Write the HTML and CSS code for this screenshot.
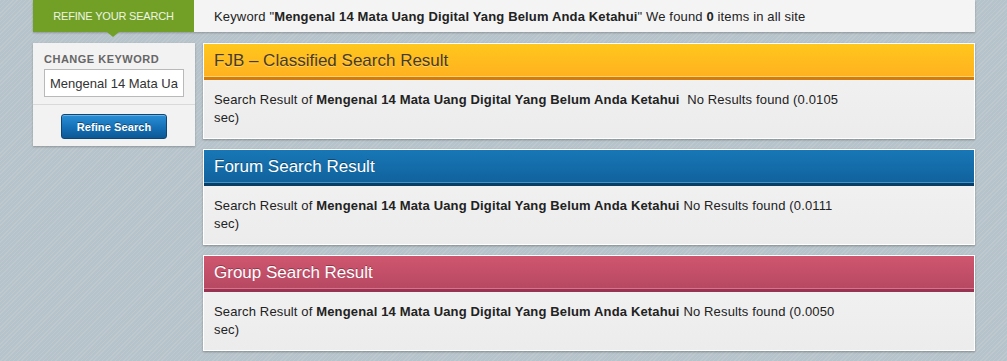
FILE: index.html
```html
<!DOCTYPE html>
<html>
<head>
<meta charset="utf-8">
<link rel="stylesheet" href="styles.css">
</head>
<body>
<div class="page">
  <div class="topbar">
    <div class="tab">REFINE YOUR SEARCH</div>
    <div class="summary">Keyword "<b>Mengenal 14 Mata Uang Digital Yang Belum Anda Ketahui</b>" We found <b>0</b> items in all site</div>
  </div>
  <div class="main">
    <div class="sidebar">
      <div class="side-top">
        <div class="label">CHANGE KEYWORD</div>
        <input class="kw" type="text" value="Mengenal 14 Mata Uang Digital Yang Belum Anda Ketahui">
      </div>
      <div class="side-bottom">
        <button class="btn">Refine Search</button>
      </div>
    </div>
    <div class="results">
      <div class="panel fjb">
        <div class="head">FJB – Classified Search Result</div>
        <div class="body"><p><span>Search Result of <b>Mengenal 14 Mata Uang Digital Yang Belum Anda Ketahui</b>&nbsp; No Results found (0.0105</span><br><span>sec)</span></p></div>
      </div>
      <div class="panel forum">
        <div class="head">Forum Search Result</div>
        <div class="body"><p><span>Search Result of <b>Mengenal 14 Mata Uang Digital Yang Belum Anda Ketahui</b> No Results found (0.0111</span><br><span>sec)</span></p></div>
      </div>
      <div class="panel group">
        <div class="head">Group Search Result</div>
        <div class="body"><p><span>Search Result of <b>Mengenal 14 Mata Uang Digital Yang Belum Anda Ketahui</b> No Results found (0.0050</span><br><span>sec)</span></p></div>
      </div>
    </div>
  </div>
</div>
</body>
</html>
```

FILE: styles.css
```css
html, body {
  margin: 0;
  padding: 0;
}
body {
  width: 1007px;
  height: 361px;
  overflow: hidden;
  font-family: "Liberation Sans", Arial, sans-serif;
  font-size: 13px;
  letter-spacing: 0.15px;
  color: #222;
  background-color: #b7c3ca;
  background-image: repeating-linear-gradient(135deg, rgba(255,255,255,0.10) 0 1px, rgba(0,0,0,0) 1px 3px);
}
.page {
  padding-left: 33px;
  width: 942px;
}
.topbar {
  display: flex;
  height: 32px;
  background: #f4f4f4;
  box-shadow: 0 1px 2px rgba(0,0,0,0.25);
  position: relative;
}
.tab {
  position: relative;
  width: 161px;
  background: #72a026;
  color: #eef5e2;
  font-size: 11px;
  letter-spacing: -0.2px;
  display: flex;
  align-items: center;
  justify-content: center;
}
.tab::after {
  content: "";
  position: absolute;
  left: 74px;
  top: 32px;
  border-left: 6px solid transparent;
  border-right: 6px solid transparent;
  border-top: 5px solid #72a026;
}
.summary {
  padding-left: 20px;
  display: flex;
  align-items: center;
  white-space: pre;
  color: #222;
}
.main {
  display: flex;
  gap: 8px;
  margin-top: 11px;
  align-items: flex-start;
}
.sidebar {
  width: 162px;
  background: #f2f2f2;
  box-shadow: 0 1px 2px rgba(0,0,0,0.25);
}
.side-top {
  padding: 10px 11px 7px 11px;
  border-bottom: 1px solid #d9d9d9;
}
.label {
  font-size: 11px;
  font-weight: bold;
  color: #666;
  letter-spacing: 0.5px;
  line-height: 13px;
  margin-bottom: 3px;
}
.kw {
  box-sizing: border-box;
  width: 140px;
  height: 28px;
  border: 1px solid #b9b9b9;
  background: #fff;
  font-family: "Liberation Sans", Arial, sans-serif;
  font-size: 13px;
  color: #333;
  padding: 0 5px;
  margin: 0;
  outline: none;
}
.side-bottom {
  display: flex;
  justify-content: center;
  padding: 9px 0 7px 0;
}
.btn {
  width: 106px;
  height: 25px;
  border: 1px solid #0b4677;
  border-radius: 3px;
  background: linear-gradient(#2a8fd6, #1470b6 55%, #0c5894);
  color: #fff;
  font-family: "Liberation Sans", Arial, sans-serif;
  font-weight: bold;
  font-size: 11px;
  letter-spacing: 0.1px;
  text-shadow: 0 -1px 0 rgba(0,0,0,0.4);
  box-shadow: inset 0 1px 0 rgba(255,255,255,0.3);
  padding: 0;
}
.results {
  width: 772px;
  display: flex;
  flex-direction: column;
  gap: 10px;
}
.panel {
  border: 1px solid #fff;
  box-sizing: border-box;
  box-shadow: 0 1px 2px rgba(0,0,0,0.3);
  background: linear-gradient(#f3f3f3, #ececec);
}
.head {
  height: 33px;
  line-height: 34px;
  padding-left: 10px;
  font-size: 17px;
  letter-spacing: 0;
}
.fjb .head {
  background: linear-gradient(#ffc71c, #ffb120);
  color: #4a3b1c;
  text-shadow: 0 1px 0 rgba(255,255,255,0.35);
  border-bottom: 3px solid #d27c10;
  box-shadow: inset 0 -1px 0 #ffd36a;
}
.forum .head {
  background: linear-gradient(#1877b6, #10629c);
  color: #fff;
  text-shadow: 0 -1px 0 rgba(0,0,0,0.35);
  border-bottom: 3px solid #0a3d63;
  box-shadow: inset 0 -1px 0 #3d93cc;
}
.group .head {
  background: linear-gradient(#d0566f, #b64862);
  color: #fff;
  text-shadow: 0 -1px 0 rgba(0,0,0,0.3);
  border-bottom: 3px solid #963451;
  box-shadow: inset 0 -1px 0 #d9728a;
}
.body {
  padding: 11px 10px 11px 10px;
  height: 36px;
}
.body p {
  margin: 0;
  width: 660px;
  line-height: 18px;
  color: #222;
  white-space: nowrap;
}
```
